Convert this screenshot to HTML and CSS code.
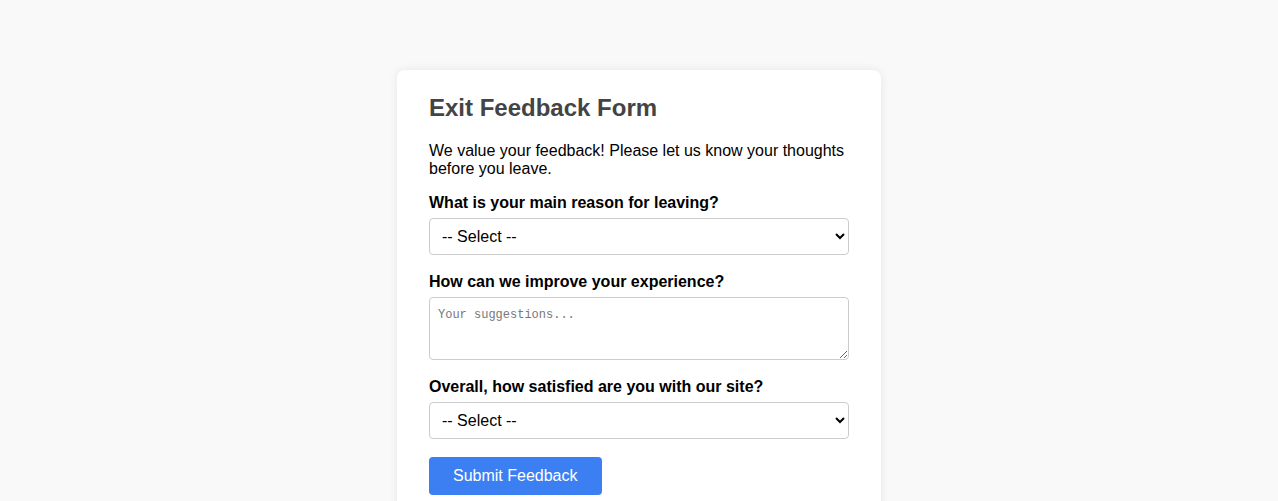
FILE: index.html
```html
<!DOCTYPE html>
<html lang="en">
<head>
<meta charset="utf-8">
<title>Exit Feedback Form</title>
<link rel="stylesheet" href="styles.css">
</head>
<body>
<main class="card">
  <h2 class="title">Exit Feedback Form</h2>
  <p class="intro">We value your feedback! Please let us know your thoughts before you leave.</p>
  <form class="form">
    <div class="group">
      <label class="label" for="reason">What is your main reason for leaving?</label>
      <select class="field select" id="reason">
        <option>-- Select --</option>
      </select>
    </div>
    <div class="group">
      <label class="label" for="improve">How can we improve your experience?</label>
      <textarea class="field textarea" id="improve" placeholder="Your suggestions..."></textarea>
    </div>
    <div class="group">
      <label class="label" for="satisfied">Overall, how satisfied are you with our site?</label>
      <select class="field select" id="satisfied">
        <option>-- Select --</option>
      </select>
    </div>
    <button type="button" class="submit">Submit Feedback</button>
  </form>
</main>
</body>
</html>
```

FILE: styles.css
```css
html, body {
  margin: 0;
  padding: 0;
}
body {
  background: #f9f9f9;
  font-family: "Liberation Sans", Arial, sans-serif;
  color: #000;
  padding-top: 70px;
}
.card {
  box-sizing: border-box;
  width: 484px;
  margin: 0 auto;
  background: #fff;
  border-radius: 8px;
  box-shadow: 0 0 10px rgba(0, 0, 0, 0.08);
  padding: 24px 32px 40px;
}
.title {
  margin: 0 0 20px;
  font-size: 24px;
  font-weight: bold;
  color: #444;
}
.intro {
  margin: 0 0 16px;
  font-size: 16px;
}
.form {
  display: flex;
  flex-direction: column;
}
.group {
  display: flex;
  flex-direction: column;
  margin-bottom: 18px;
}
.label {
  font-weight: bold;
  font-size: 16px;
  margin-bottom: 6px;
}
.field {
  box-sizing: border-box;
  width: 100%;
  border: 1px solid #ccc;
  border-radius: 4px;
  background: #fff;
  font-family: "Liberation Sans", Arial, sans-serif;
  font-size: 16px;
  color: #000;
}
.select {
  height: 37px;
  padding: 0 8px;
}
.textarea {
  display: block;
  height: 63px;
  padding: 10px 8px 8px;
  font-family: "Liberation Mono", "DejaVu Sans Mono", monospace;
  font-size: 12px;
  resize: vertical;
}
.textarea::placeholder {
  color: #777;
}
.submit {
  align-self: flex-start;
  height: 38px;
  padding: 0 24px;
  border: none;
  border-radius: 4px;
  background: #3b7ff3;
  color: #fff;
  font-family: "Liberation Sans", Arial, sans-serif;
  font-size: 16px;
  cursor: pointer;
}
```
